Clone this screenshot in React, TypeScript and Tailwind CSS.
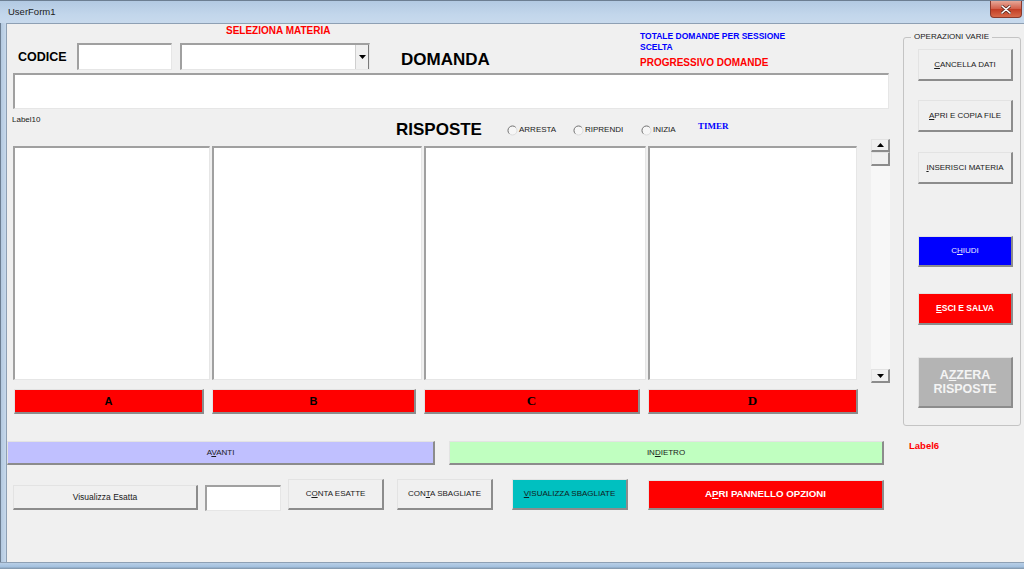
import React from 'react';

// raised / sunken win32-style edges
const raised =
  'border border-t-[#e3e3e3] border-l-[#e3e3e3] border-r-2 border-b-2 border-r-[#8c8c8c] border-b-[#8c8c8c]';
const sunken =
  'border border-t-2 border-l-2 border-t-[#a0a0a0] border-l-[#a0a0a0] border-r-[#e6e6e6] border-b-[#e6e6e6] bg-white';

const Radio: React.FC<{ label: string; className: string }> = ({ label, className }) => (
  <div className={`flex h-[10px] items-center ${className}`}>
    <svg width="11" height="11" viewBox="0 0 11 11" className="shrink-0">
      <circle cx="5.5" cy="5.5" r="4.5" fill="#f6f6f6" stroke="#dcdcdc" />
      <path d="M2.3 8.7 A4.5 4.5 0 0 1 8.7 2.3" fill="none" stroke="#7a7a7a" strokeWidth="1" />
    </svg>
    <span className="ml-[1px] text-[8px] leading-[10px] text-[#1a1a1a]">{label}</span>
  </div>
);

const Arrow: React.FC<{ up?: boolean }> = ({ up }) => (
  <svg width="7" height="4" viewBox="0 0 7 4">
    <path d={up ? 'M0 4 L3.5 0 L7 4 Z' : 'M0 0 L7 0 L3.5 4 Z'} fill="#000" />
  </svg>
);

export default function App() {
  return (
    <div className="flex h-[569px] w-[1024px] flex-col overflow-hidden bg-[#bfd3e8] font-['Liberation_Sans',Arial,sans-serif]">
      {/* Title bar */}
      <div className="flex h-[23px] shrink-0 justify-between border-t border-[#6c7e92] bg-[linear-gradient(180deg,#b2c9e2,#c2d6eb_60%,#c8daed)]">
        <span className="mt-[5px] pl-[8px] text-[9.5px] leading-[12px] text-[#1b1b1b]">UserForm1</span>
        <div className="mr-[2px] flex h-[17px] w-[32px] items-center justify-center rounded-b-[4px] border border-t-0 border-[#8a3a2c] bg-[linear-gradient(180deg,#e6a898,#d3604a_48%,#c23e25_52%,#d86a4a)]">
          <svg width="10" height="9" viewBox="0 0 10 9">
            <path d="M1 1 L9 8 M9 1 L1 8" stroke="#5a2a20" strokeWidth="3" strokeLinecap="round" />
            <path d="M1 1 L9 8 M9 1 L1 8" stroke="#fff" strokeWidth="1.6" strokeLinecap="round" />
          </svg>
        </div>
      </div>

      <div className="flex h-[539px] shrink-0">
        <div className="w-[6px] shrink-0 border-l border-[#6c7e92] bg-[linear-gradient(90deg,#b3c9e0,#c7d9ec)]" />

        {/* Client area */}
        <div className="flex flex-1 border-l border-t border-[#8ea0b4] bg-[#f0f0f0] text-[#1a1a1a]">
          {/* Main column */}
          <div className="flex w-[888px] shrink-0 flex-col">
            {/* Top block */}
            <div className="flex h-[46px]">
              <div className="flex w-[363px] shrink-0 flex-col">
                <div className="h-[19px] pl-[219px] pt-[1px] text-[10px] font-bold leading-[12px] text-[#ff0000]">
                  SELEZIONA MATERIA
                </div>
                <div className="flex h-[27px] items-center">
                  <div className="w-[70px] pl-[11px] text-[12.5px] font-bold leading-[16px] text-black">CODICE</div>
                  <div className={`h-[27px] w-[95px] ${sunken}`} />
                  <div className={`ml-[8px] flex h-[27px] w-[190px] ${sunken}`}>
                    <div className="flex-1" />
                    <div className="flex w-[14px] items-center justify-center border-l border-[#cfcfcf] border-r border-r-[#7a7a7a] bg-[#f0f0f0]">
                      <Arrow />
                    </div>
                  </div>
                </div>
              </div>
              <div className="w-[270px] shrink-0 pl-[31px] pt-[26px] text-[17px] font-bold leading-[20px] text-black">
                DOMANDA
              </div>
              <div className="flex flex-col">
                <div className="mt-[7px] text-[8.5px] font-bold leading-[10.5px] text-[#0000ff]">
                  TOTALE DOMANDE PER SESSIONE
                  <br />
                  SCELTA
                </div>
                <div className="mt-[5px] text-[10px] font-bold leading-[12px] text-[#ff0000]">PROGRESSIVO DOMANDE</div>
              </div>
            </div>

            {/* Question box */}
            <div className={`ml-[6px] mt-[3px] h-[36px] w-[876px] ${sunken}`} />

            {/* Answers */}
            <div className="flex">
              <div className="flex w-[851px] shrink-0 flex-col">
                <div className="flex h-[37px] items-start">
                  <div className="w-[389px] shrink-0 pl-[5px] pt-[6px] text-[8px] leading-[10px]">Label10</div>
                  <div className="w-[111px] shrink-0 pt-[11px] text-[17px] font-bold leading-[20px] text-black">RISPOSTE</div>
                  <Radio label="ARRESTA" className="mt-[16px] w-[66px]" />
                  <Radio label="RIPRENDI" className="mt-[16px] w-[68px]" />
                  <Radio label="INIZIA" className="mt-[16px] w-[57px]" />
                  <div className="mt-[12px] font-['Liberation_Serif','Times_New_Roman',serif] text-[9px] font-bold leading-[11px] text-[#0000ff]">
                    TIMER
                  </div>
                </div>

                <div className="ml-[6px] flex h-[234px] gap-[2px]">
                  <div className={`h-full w-[197px] ${sunken}`} />
                  <div className={`h-full w-[210px] ${sunken}`} />
                  <div className={`h-full w-[222px] ${sunken}`} />
                  <div className={`h-full w-[209px] ${sunken}`} />
                </div>

                <div className="mt-[9px] flex h-[25px]">
                  <div className={`ml-[7px] flex w-[190px] items-center justify-center bg-[#ff0000] text-[11px] font-bold text-black ${raised}`}>
                    A
                  </div>
                  <div className={`ml-[8px] flex w-[204px] items-center justify-center bg-[#ff0000] text-[11px] font-bold text-black ${raised}`}>
                    B
                  </div>
                  <div className={`ml-[8px] flex w-[216px] items-center justify-center bg-[#ff0000] font-['Liberation_Serif','Times_New_Roman',serif] text-[13px] font-bold text-black ${raised}`}>
                    C
                  </div>
                  <div className={`ml-[8px] flex w-[210px] items-center justify-center bg-[#ff0000] font-['Liberation_Serif','Times_New_Roman',serif] text-[13px] font-bold text-black ${raised}`}>
                    D
                  </div>
                </div>
              </div>

              {/* Scrollbar */}
              <div className="ml-[13px] mt-[30px] flex h-[244px] w-[19px] flex-col bg-[#f7f7f7]">
                <div className={`flex h-[13px] items-center justify-center bg-[#f0f0f0] ${raised}`}>
                  <Arrow up />
                </div>
                <div className={`h-[14px] bg-[#f0f0f0] ${raised}`} />
                <div className="flex-1" />
                <div className={`flex h-[14px] items-center justify-center bg-[#f0f0f0] ${raised}`}>
                  <Arrow />
                </div>
              </div>
            </div>

            {/* Avanti / Indietro */}
            <div className="mt-[27px] flex h-[24px]">
              <div className={`flex w-[428px] items-center justify-center bg-[#c0c0ff] text-[8px] ${raised}`}>
                <span>
                  A<span className="underline">V</span>ANTI
                </span>
              </div>
              <div className={`ml-[14px] flex w-[435px] items-center justify-center bg-[#c0ffc0] text-[8px] ${raised}`}>
                <span>
                  IN<span className="underline">D</span>IETRO
                </span>
              </div>
            </div>

            {/* Bottom row */}
            <div className="mt-[14px] flex h-[32px] items-start">
              <div className={`ml-[6px] mt-[6px] flex h-[25px] w-[185px] items-center justify-center bg-[#f0f0f0] text-[8.5px] ${raised}`}>
                Visualizza Esatta
              </div>
              <div className={`ml-[7px] mt-[6px] h-[26px] w-[76px] ${sunken}`} />
              <div className={`ml-[7px] flex h-[31px] w-[96px] items-center justify-center bg-[#f0f0f0] text-[8px] ${raised}`}>
                <span>
                  C<span className="underline">O</span>NTA ESATTE
                </span>
              </div>
              <div className={`ml-[13px] flex h-[31px] w-[96px] items-center justify-center bg-[#f0f0f0] text-[8px] ${raised}`}>
                <span>
                  CON<span className="underline">T</span>A SBAGLIATE
                </span>
              </div>
              <div className={`ml-[19px] flex h-[31px] w-[116px] items-center justify-center bg-[#00c0c0] text-[8px] text-[#102020] ${raised}`}>
                <span>
                  <span className="underline">V</span>ISUALIZZA SBAGLIATE
                </span>
              </div>
              <div className={`ml-[20px] mt-[1px] flex h-[30px] w-[236px] items-center justify-center bg-[#ff0000] text-[9.7px] font-bold text-white ${raised}`}>
                <span>
                  A<span className="underline">P</span>RI PANNELLO OPZIONI
                </span>
              </div>
            </div>
          </div>

          {/* Right column */}
          <div className="flex w-[129px] shrink-0 flex-col">
            <fieldset className="ml-[8px] mt-[8px] w-[118px] rounded-[3px] border border-[#c4c4c4] pb-[17px]">
              <legend className="ml-[7px] px-[3px] text-[8px] leading-[10px]">OPERAZIONI VARIE</legend>
              <div className="ml-[14px] flex flex-col">
                <div className={`mt-[7px] flex h-[32px] w-[95px] items-center justify-center bg-[#f0f0f0] text-[8px] ${raised}`}>
                  <span>
                    <span className="underline">C</span>ANCELLA DATI
                  </span>
                </div>
                <div className={`mt-[19px] flex h-[32px] w-[95px] items-center justify-center bg-[#f0f0f0] text-[8px] ${raised}`}>
                  <span>
                    <span className="underline">A</span>PRI E COPIA FILE
                  </span>
                </div>
                <div className={`mt-[20px] flex h-[32px] w-[95px] items-center justify-center bg-[#f0f0f0] text-[8px] ${raised}`}>
                  <span>
                    <span className="underline">I</span>NSERISCI MATERIA
                  </span>
                </div>
                <div className={`mt-[52px] flex h-[31px] w-[95px] items-center justify-center bg-[#0000ff] text-[8px] text-[#e8e8ff] ${raised}`}>
                  <span>
                    C<span className="underline">H</span>IUDI
                  </span>
                </div>
                <div className={`mt-[26px] flex h-[32px] w-[95px] items-center justify-center bg-[#ff0000] text-[8.5px] font-bold text-white ${raised}`}>
                  <span>
                    <span className="underline">E</span>SCI E SALVA
                  </span>
                </div>
                <div className={`mt-[32px] flex h-[51px] w-[95px] items-center justify-center bg-[#b4b4b4] text-center text-[12.5px] font-bold leading-[14px] text-[#f4f4f4] ${raised}`}>
                  <span>
                    A<span className="underline">Z</span>ZERA
                    <br />
                    RISPOSTE
                  </span>
                </div>
              </div>
            </fieldset>
            <div className="mt-[14px] pl-[14px] text-[9.5px] font-bold leading-[12px] text-[#ff0000]">Label6</div>
          </div>
        </div>
      </div>

      {/* Bottom frame */}
      <div className="h-[7px] shrink-0 border-t border-[#8ea0b4] bg-[linear-gradient(180deg,#b9cfe6,#a5c2e0_60%,#7e93a8)]" />
    </div>
  );
}
